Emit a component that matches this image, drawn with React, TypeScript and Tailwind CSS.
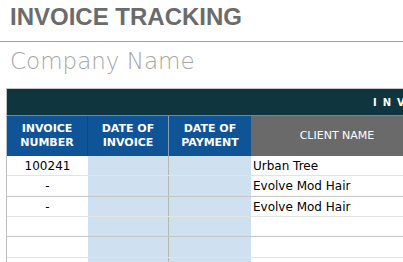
import React from "react";

const rows = [
  { num: "100241", client: "Urban Tree", h: "h-[20px]", line: "border-[#e3e3e3]" },
  { num: "-", client: "Evolve Mod Hair", h: "h-[21px]", line: "border-[#c6c6c6]" },
  { num: "-", client: "Evolve Mod Hair", h: "h-[20px]", line: "border-[#e3e3e3]" },
  { num: "", client: "", h: "h-[20px]", line: "border-[#c6c6c6]" },
  { num: "", client: "", h: "h-[21px]", line: "border-[#e3e3e3]" },
  { num: "", client: "", h: "h-[20px]", line: "border-[#c6c6c6]" },
];

export default function App() {
  const font = { fontFamily: '"DejaVu Sans", "Liberation Sans", sans-serif' };
  return (
    <div className="w-[403px] h-[262px] overflow-hidden bg-white" style={font}>
      <div
        className="h-[41px] pl-[10px] pt-[2px] text-[24px] leading-[30px] font-bold text-[#6b6b6b] whitespace-nowrap"
        style={{ fontFamily: '"Liberation Sans", Arial, sans-serif' }}
      >
        INVOICE TRACKING
      </div>
      <div className="h-px bg-[#a0a0a0]" />
      <div className="h-[46px] pl-[10px] pt-[5px] text-[23px] leading-[29px] font-extralight text-[#a6a6a6] whitespace-nowrap">
        Company Name
      </div>
      <div className="ml-[6px] w-[600px] border-l border-[#bfbfbf]">
        <div className="h-[1px] bg-[#c8c8c8]" />
        <div className="h-[26px] bg-[#0f363e] flex items-center">
          <div className="pl-[366px] text-[10px] font-bold text-white tracking-[6px] whitespace-nowrap">
            INVOICE
          </div>
        </div>
        <div className="h-px bg-[#6d8a99]" />
        <div className="flex h-[40px] text-white text-[11px] leading-[14px] font-bold">
          <div className="w-[81px] bg-[#0e5496] flex items-center justify-center text-center border-r border-[#0b4a85]">
            INVOICE<br />NUMBER
          </div>
          <div className="w-[81px] bg-[#0e5496] flex items-center justify-center text-center border-r border-[#7f9fc0]">
            DATE OF<br />INVOICE
          </div>
          <div className="w-[82px] bg-[#0e5496] flex items-center justify-center text-center">
            DATE OF<br />PAYMENT
          </div>
          <div className="w-[172px] bg-[#6a6a6a] flex items-center justify-center text-center font-normal">
            CLIENT NAME
          </div>
          <div className="flex-1 bg-[#6a6a6a]" />
        </div>
        {rows.map((r, i) => (
          <div key={i} className={`flex ${r.h} border-b ${r.line} text-[12px] text-black`}>
            <div className="w-[81px] flex items-center justify-center">{r.num}</div>
            <div className="w-[81px] bg-[#cfe0f1] border-r border-[#b5b5b5]" />
            <div className="w-[82px] bg-[#cfe0f1]" />
            <div className="flex-1 flex items-center pl-[2px] whitespace-nowrap">{r.client}</div>
          </div>
        ))}
      </div>
    </div>
  );
}
